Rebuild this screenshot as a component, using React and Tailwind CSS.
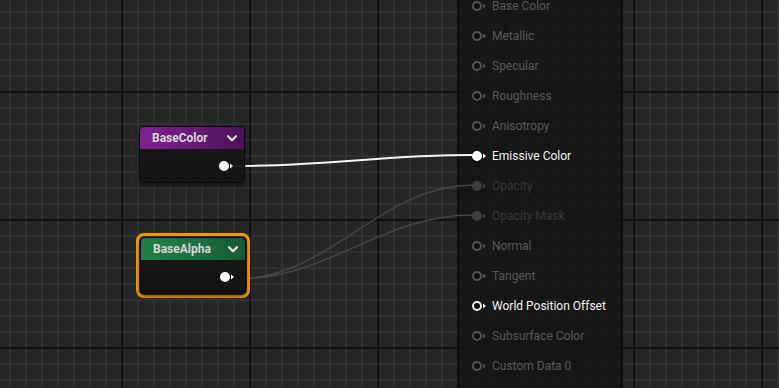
import React from 'react';

const inputs = [
  { label: 'Base Color', state: 'idle' },
  { label: 'Metallic', state: 'idle' },
  { label: 'Specular', state: 'idle' },
  { label: 'Roughness', state: 'idle' },
  { label: 'Anisotropy', state: 'idle' },
  { label: 'Emissive Color', state: 'linked' },
  { label: 'Opacity', state: 'off' },
  { label: 'Opacity Mask', state: 'off' },
  { label: 'Normal', state: 'idle' },
  { label: 'Tangent', state: 'idle' },
  { label: 'World Position Offset', state: 'hot' },
  { label: 'Subsurface Color', state: 'idle' },
  { label: 'Custom Data 0', state: 'idle' },
];

const pinColors = {
  idle: { ring: '#555655', fill: '#0f100f', arrow: '#555655' },
  linked: { ring: '#ffffff', fill: '#ffffff', arrow: '#ffffff' },
  off: { ring: '#3e3f3e', fill: '#3e3f3e', arrow: '#3e3f3e' },
  hot: { ring: '#ececec', fill: '#0f100f', arrow: '#ececec' },
};

const labelColors = {
  idle: 'text-[#5a5b5a]',
  linked: 'text-[#f2f2f2]',
  off: 'text-[#3a3b3a]',
  hot: 'text-[#f2f2f2]',
};

const Pin = ({ state }) => {
  const c = pinColors[state];
  return (
    <svg width="16" height="12" viewBox="0 0 16 12" className="shrink-0">
      <circle cx="5" cy="6" r="4" fill={c.fill} stroke={c.ring} strokeWidth="2" />
      <polygon points="11,3.5 14,6 11,8.5" fill={c.arrow} />
    </svg>
  );
};

const Chevron = () => (
  <svg width="10" height="7" viewBox="0 0 10 7">
    <polyline points="1,1.2 5,5.2 9,1.2" fill="none" stroke="#e6e6e6" strokeWidth="2.2" strokeLinecap="round" strokeLinejoin="round" />
  </svg>
);

const ParamNode = ({ title, header }) => (
  <div className="w-[106px] h-[57px] rounded-[5px] overflow-hidden bg-[#101010]/90 border border-[#080808] shadow-[0_2px_4px_rgba(0,0,0,0.6)]">
    <div className={`h-[22px] flex items-center justify-between pl-[12px] pr-[7px] ${header}`}>
      <span className="text-[12px] font-bold text-[#d6d6d6] leading-none">{title}</span>
      <Chevron />
    </div>
    <div className="h-[34px] flex items-center justify-end pr-[9px] bg-gradient-to-b from-[#1b1b1b]/60 to-transparent">
      <Pin state="linked" />
    </div>
  </div>
);

const GridBackdrop = () => (
  <svg className="absolute inset-0" width="779" height="388">
    <defs>
      <pattern id="grid" x="9" y="11" width="128" height="128" patternUnits="userSpaceOnUse">
        {[0, 16, 32, 48, 64, 80, 96, 112].map((p) => (
          <React.Fragment key={p}>
            <rect x="0" y={p} width="128" height="2" fill="#323232" />
            <rect x={p} y="0" width="2" height="128" fill="#323232" />
          </React.Fragment>
        ))}
        <rect x="0" y="80" width="128" height="2" fill="#121212" />
        <rect x="112" y="0" width="2" height="128" fill="#121212" />
      </pattern>
    </defs>
    <rect width="779" height="388" fill="#262626" />
    <rect width="779" height="388" fill="url(#grid)" />
  </svg>
);

const Wires = () => (
  <svg className="absolute inset-0 pointer-events-none" width="779" height="388">
    <path d="M236 279 C 330 279, 380 185, 473 185" fill="none" stroke="#454545" strokeWidth="1.6" />
    <path d="M236 279 C 330 279, 380 215, 473 215" fill="none" stroke="#454545" strokeWidth="1.6" />
    <path d="M234 166 C 330 166, 380 155, 473 155" fill="none" stroke="#f4f4f4" strokeWidth="2" />
  </svg>
);

export default function App() {
  return (
    <div className="relative w-[779px] h-[388px] overflow-hidden bg-[#262626] font-[Roboto,sans-serif]">
      <GridBackdrop />

      {/* main material node, runs past the top and bottom of the view */}
      <div className="absolute left-[457px] top-0 bottom-0 w-[166px] bg-[#141514]/[0.88] border-x-2 border-[#0d0e0d]">
        <div className="flex flex-col mt-[-9px] pl-[13px]">
          {inputs.map((pin) => (
            <div key={pin.label} className="h-[30px] flex items-center gap-[4px]">
              <Pin state={pin.state} />
              <span className={`text-[12px] leading-none whitespace-nowrap ${labelColors[pin.state]}`}>
                {pin.label}
              </span>
            </div>
          ))}
        </div>
      </div>

      <Wires />

      <div className="absolute left-[139px] top-[126px]">
        <ParamNode title="BaseColor" header="bg-gradient-to-r from-[#7e1f90] via-[#6a1a7a] to-[#4a1356]" />
      </div>

      <div className="absolute left-[136px] top-[233px] p-px border-[3px] border-[#f39c00] rounded-[8px]">
        <ParamNode title="BaseAlpha" header="bg-gradient-to-r from-[#218046] via-[#1c7040] to-[#175a33]" />
      </div>
    </div>
  );
}
